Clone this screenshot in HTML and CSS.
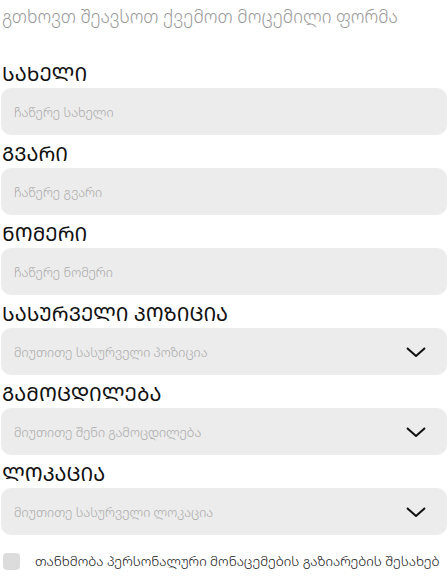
FILE: index.html
```html
<!DOCTYPE html>
<html lang="ka">
<head>
<meta charset="utf-8">
<link rel="stylesheet" href="styles.css">
</head>
<body>
<div class="page">
  <p class="intro">გთხოვთ შეავსოთ ქვემოთ მოცემილი ფორმა</p>
  <form class="form">
    <div class="field">
      <label class="label">ᲡᲐᲮᲔᲚᲘ</label>
      <div class="input"><span class="ph">ჩაწერე სახელი</span></div>
    </div>
    <div class="field">
      <label class="label">ᲒᲕᲐᲠᲘ</label>
      <div class="input"><span class="ph">ჩაწერე გვარი</span></div>
    </div>
    <div class="field">
      <label class="label">ᲜᲝᲛᲔᲠᲘ</label>
      <div class="input"><span class="ph">ჩაწერე ნომერი</span></div>
    </div>
    <div class="field">
      <label class="label">ᲡᲐᲡᲣᲠᲕᲔᲚᲘ ᲞᲝᲖᲘᲪᲘᲐ</label>
      <div class="input select"><span class="ph">მიუთითე სასურველი პოზიცია</span>
        <svg class="chev" width="20" height="10" viewBox="0 0 20 10"><path d="M1 1 L10 9 L19 1" fill="none" stroke="#111" stroke-width="2"/></svg>
      </div>
    </div>
    <div class="field">
      <label class="label">ᲒᲐᲛᲝᲪᲓᲘᲚᲔᲑᲐ</label>
      <div class="input select"><span class="ph">მიუთითე შენი გამოცდილება</span>
        <svg class="chev" width="20" height="10" viewBox="0 0 20 10"><path d="M1 1 L10 9 L19 1" fill="none" stroke="#111" stroke-width="2"/></svg>
      </div>
    </div>
    <div class="field">
      <label class="label">ᲚᲝᲙᲐᲪᲘᲐ</label>
      <div class="input select"><span class="ph">მიუთითე სასურველი ლოკაცია</span>
        <svg class="chev" width="20" height="10" viewBox="0 0 20 10"><path d="M1 1 L10 9 L19 1" fill="none" stroke="#111" stroke-width="2"/></svg>
      </div>
    </div>
    <div class="consent">
      <span class="box"></span>
      <span class="consent-text">თანხმობა პერსონალური მონაცემების გაზიარების შესახებ</span>
    </div>
  </form>
</div>
</body>
</html>
```
FILE: styles.css
```css
* { box-sizing: border-box; }
html, body { margin: 0; padding: 0; background: #fff; }
body { font-family: "Noto Sans Georgian", "DejaVu Sans", sans-serif; }
.page { padding: 0 1px; }
.intro {
  margin: 0;
  padding-top: 3px;
  font-size: 17.6px;
  font-weight: 300;
  line-height: 26px;
  color: #9a9a9a;
  padding-left: 1px;
}
.form { margin-top: 26px; display: flex; flex-direction: column; }
.field { display: flex; flex-direction: column; }
.label {
  display: block;
  height: 33px;
  line-height: 38px;
  font-size: 20px;
  font-weight: 400;
  color: #111;
  padding-left: 1px;
}
.input {
  height: 47px;
  border-radius: 10px;
  background: #ececec;
  display: flex;
  align-items: center;
  padding: 0 21px 0 13px;
}
.ph { font-size: 12.8px; font-weight: 300; color: #a9a9a9; flex: 1; }
.chev { flex: none; }
.consent {
  margin-top: 17px;
  display: flex;
  align-items: center;
  gap: 15px;
  padding-left: 2px;
}
.box {
  width: 17px;
  height: 17px;
  border-radius: 4px;
  background: #dcdcdc;
  flex: none;
}
.consent-text { font-size: 13.5px; font-weight: 350; color: #111; white-space: nowrap; }
```
